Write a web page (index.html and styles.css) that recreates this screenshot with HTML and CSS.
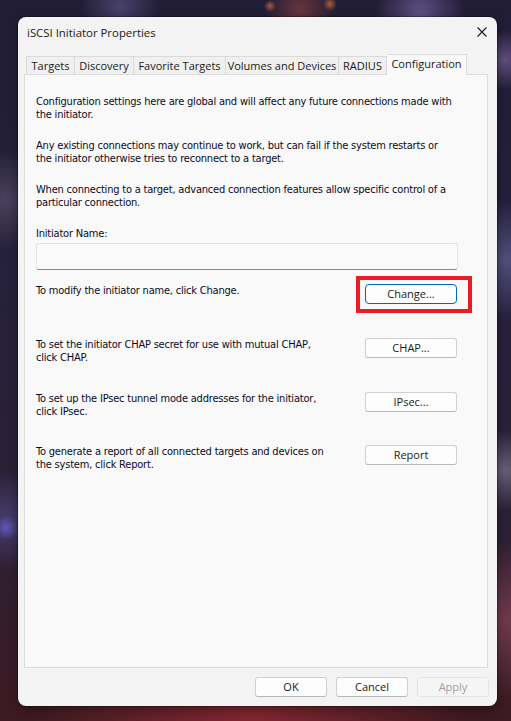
FILE: index.html
```html
<!DOCTYPE html>
<html lang="en">
<head>
<meta charset="utf-8">
<title>iSCSI Initiator Properties</title>
<link rel="stylesheet" href="styles.css">
</head>
<body>
<div class="desktop">
  <div class="window">
    <div class="titlebar">
      <span class="title">iSCSI Initiator Properties</span>
      <svg class="close" width="10" height="10" viewBox="0 0 10 10"><path d="M0.5 0.5 L9.5 9.5 M9.5 0.5 L0.5 9.5" stroke="#1a1a1a" stroke-width="1.1" fill="none"/></svg>
    </div>
    <div class="tabs">
      <div class="tab t1">Targets</div>
      <div class="tab t2">Discovery</div>
      <div class="tab t3">Favorite Targets</div>
      <div class="tab t4">Volumes and Devices</div>
      <div class="tab t5">RADIUS</div>
      <div class="tab active">Configuration</div>
    </div>
    <div class="panel">
      <p class="para">Configuration settings here are global and will affect any future connections made with<br>the initiator.</p>
      <p class="para">Any existing connections may continue to work, but can fail if the system restarts or<br>the initiator otherwise tries to reconnect to a target.</p>
      <p class="para">When connecting to a target, advanced connection features allow specific control of a<br>particular connection.</p>
      <label class="label">Initiator Name:</label>
      <div class="input"></div>
      <div class="row first">
        <p class="row-text">To modify the initiator name, click Change.</p>
        <div class="btn-wrap">
          <button class="btn focused">Change...</button>
          <div class="highlight"></div>
        </div>
      </div>
      <div class="row">
        <p class="row-text">To set the initiator CHAP secret for use with mutual CHAP,<br>click CHAP.</p>
        <button class="btn">CHAP...</button>
      </div>
      <div class="row short">
        <p class="row-text">To set up the IPsec tunnel mode addresses for the initiator,<br>click IPsec.</p>
        <button class="btn">IPsec...</button>
      </div>
      <div class="row">
        <p class="row-text">To generate a report of all connected targets and devices on<br>the system, click Report.</p>
        <button class="btn">Report</button>
      </div>
    </div>
    <div class="footer">
      <button class="fbtn">OK</button>
      <button class="fbtn">Cancel</button>
      <button class="fbtn disabled">Apply</button>
    </div>
  </div>
</div>
</body>
</html>
```
FILE: styles.css
```css
html, body {
  margin: 0;
  padding: 0;
}
body {
  width: 511px;
  height: 721px;
  overflow: hidden;
}
.desktop {
  width: 511px;
  height: 721px;
  padding: 17px 0 0 18px;
  box-sizing: border-box;
  background:
    radial-gradient(circle at 270px 6px, rgba(220,110,70,0.7) 0, rgba(220,110,70,0) 6px),
    radial-gradient(circle at 330px 4px, rgba(230,120,60,0.7) 0, rgba(230,120,60,0) 7px),
    radial-gradient(circle at 300px 10px, rgba(190,80,70,0.45) 0, rgba(190,80,70,0) 35px),
    radial-gradient(circle at 420px 12px, rgba(150,130,210,0.5) 0, rgba(150,130,210,0) 45px),
    radial-gradient(circle at 120px 6px, rgba(120,110,170,0.45) 0, rgba(120,110,170,0) 40px),
    radial-gradient(circle at 505px 60px, rgba(150,120,190,0.55) 0, rgba(150,120,190,0) 30px),
    radial-gradient(circle at 505px 260px, rgba(110,110,170,0.6) 0, rgba(110,110,170,0) 60px),
    radial-gradient(circle at 505px 470px, rgba(150,150,170,0.55) 0, rgba(150,150,170,0) 40px),
    radial-gradient(circle at 6px 200px, rgba(110,100,130,0.5) 0, rgba(110,100,130,0) 50px),
    radial-gradient(circle at 6px 528px, rgba(110,100,220,0.7) 0, rgba(110,100,220,0) 12px),
    radial-gradient(circle at 6px 520px, rgba(90,80,150,0.6) 0, rgba(90,80,150,0) 50px),
    radial-gradient(circle at 250px 730px, rgba(140,40,50,0.9) 0, rgba(140,40,50,0) 220px),
    radial-gradient(circle at 505px 620px, rgba(140,70,90,0.7) 0, rgba(140,70,90,0) 80px),
    linear-gradient(180deg, #221d36 0%, #26213c 40%, #2d2034 75%, #3f1a22 100%);
}
.window {
  width: 479px;
  height: 689px;
  background: #f3f3f3;
  border-radius: 8px;
  box-shadow: 0 0 0 1px rgba(0,0,0,0.25), 0 4px 12px rgba(0,0,0,0.35);
  display: flex;
  flex-direction: column;
  font-family: "Open Sans", "Noto Sans", sans-serif;
  color: #1a1a1a;
}
.titlebar {
  height: 30px;
  display: flex;
  align-items: center;
  justify-content: space-between;
  padding: 0 10px 0 9px;
}
.title {
  font-size: 11.4px;
  padding-top: 1px;
}
.close {
  display: block;
}
.tabs {
  display: flex;
  align-items: flex-end;
  height: 20px;
  margin-top: 7px;
  padding-left: 8px;
}
.tab {
  flex: 0 0 auto;
  white-space: nowrap;
  text-align: center;
  height: 18px;
  line-height: 17px;
  box-sizing: border-box;
  font-size: 11px;
  border: 1px solid #dadada;
  border-bottom: none;
  border-right: none;
  background: #f0f0f0;
  color: #1a1a1a;
}
.t1 { width: 48px; }
.t2 { width: 59px; }
.t3 { width: 92px; }
.t4 { width: 113px; }
.t5 { width: 49px; border-right: 1px solid #dadada; }
.tab.active {
  width: 80px;
  height: 21px;
  line-height: 18px;
  background: #f9f9f9;
  border-left: none;
  border-right: 1px solid #dadada;
  position: relative;
  z-index: 1;
  margin-bottom: -1px;
}
.panel {
  margin-left: 6px;
  width: 464px;
  height: 594px;
  box-sizing: border-box;
  border: 1px solid #dcdcdc;
  background: #f9f9f9;
  padding: 20px 0 0 11px;
  font-family: "DejaVu Sans Condensed", "DejaVu Sans", sans-serif;
  font-size: 11px;
  letter-spacing: -0.2px;
  line-height: 13px;
  color: #0a0a1e;
}
.para {
  margin: 0 0 18px 0;
}
.label {
  display: block;
  margin: 0;
}
.input {
  margin-top: 3px;
  width: 422px;
  height: 27px;
  box-sizing: border-box;
  background: #fbfbfb;
  border: 1px solid #e3e3e3;
  border-bottom: 1px solid #8a8a8a;
  border-radius: 3px;
}
.row {
  display: flex;
  justify-content: space-between;
  align-items: flex-start;
  width: 421px;
  height: 54px;
}
.row.first {
  margin-top: 14px;
}
.row.short {
  height: 53px;
}
.row-text {
  margin: 0;
}
.btn-wrap {
  position: relative;
}
.btn {
  display: block;
  width: 92px;
  height: 20px;
  box-sizing: border-box;
  background: #fdfdfd;
  border: 1px solid #d0d0d0;
  border-bottom-color: #b8b8b8;
  border-radius: 3px;
  font-family: "Open Sans", "Noto Sans", sans-serif;
  font-size: 11px;
  letter-spacing: 0;
  color: #1a1a1a;
  padding: 0;
  line-height: 18px;
}
.btn.focused {
  border: 1px solid #0067c0;
  border-radius: 4px;
}
.highlight {
  position: absolute;
  left: -9px;
  top: -8px;
  width: 116px;
  height: 37px;
  box-sizing: border-box;
  border: 4px solid #ea1c24;
  pointer-events: none;
}
.footer {
  display: flex;
  justify-content: flex-end;
  gap: 9px;
  padding: 9px 8px 0 0;
}
.fbtn {
  width: 72px;
  height: 20px;
  box-sizing: border-box;
  background: #fdfdfd;
  border: 1px solid #d0d0d0;
  border-bottom-color: #b8b8b8;
  border-radius: 3px;
  font-family: "Open Sans", "Noto Sans", sans-serif;
  font-size: 11px;
  color: #1a1a1a;
  padding: 0;
  line-height: 18px;
}
.fbtn.disabled {
  background: #f5f5f5;
  border-color: #e5e5e5;
  color: #a0a0a0;
}
```
